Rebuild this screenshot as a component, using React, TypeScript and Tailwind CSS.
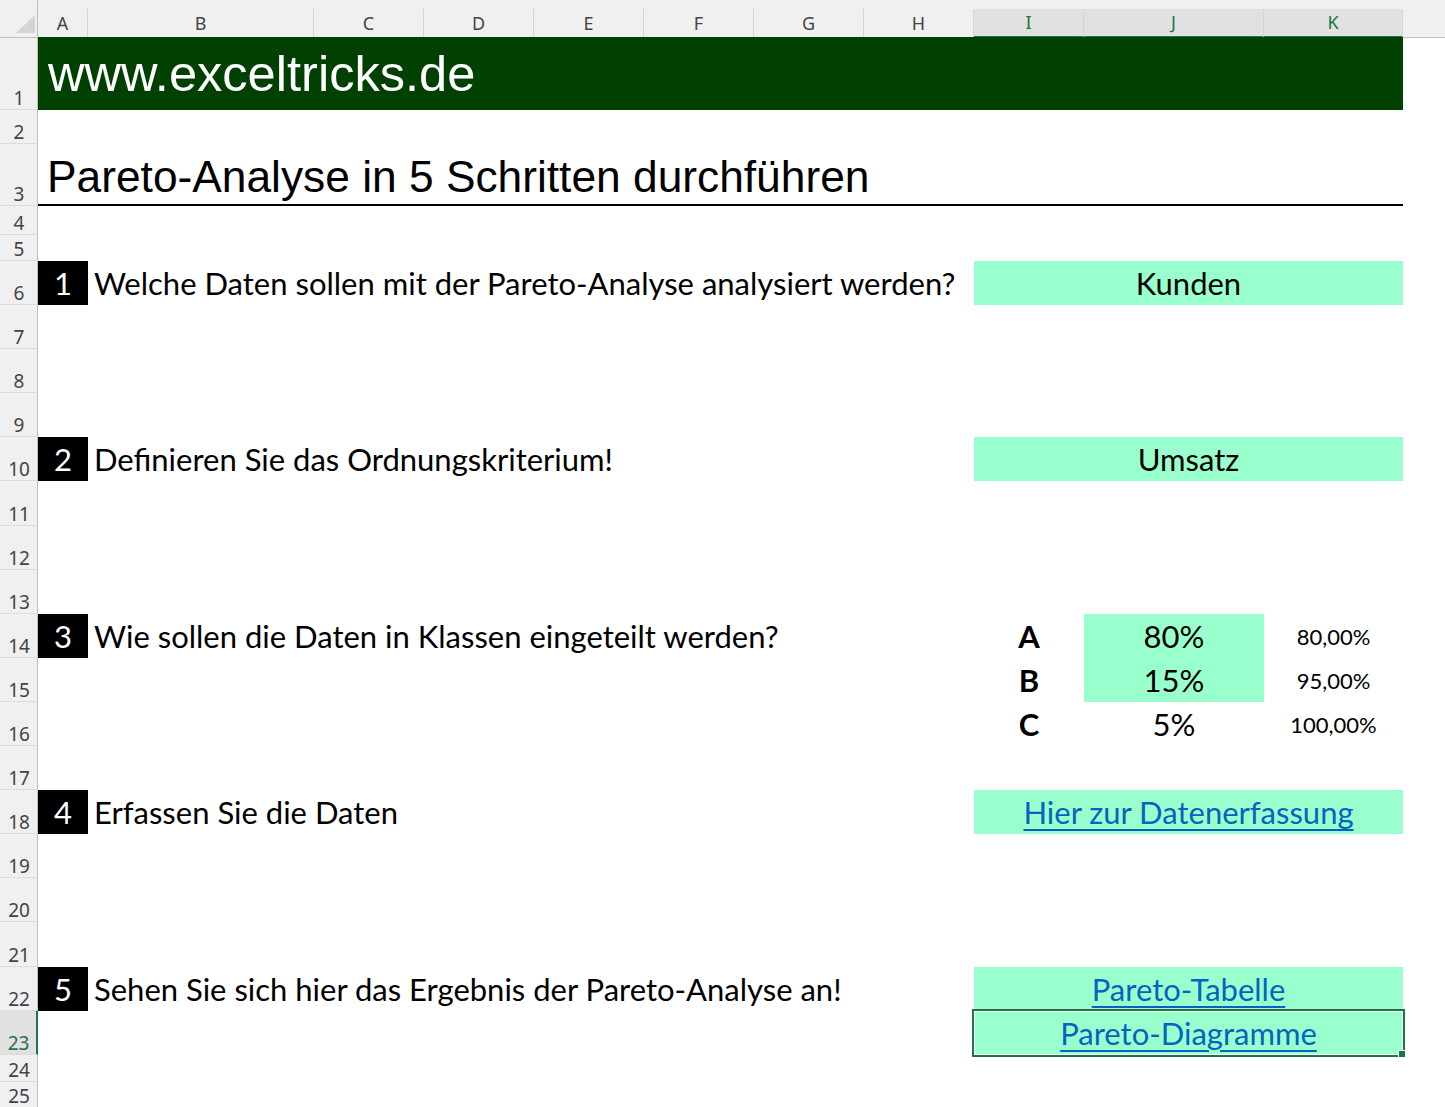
import type { ReactNode } from 'react';

const COLS = 'grid grid-cols-[38px_50px_226px_110px_110px_110px_110px_110px_110px_110px_180px_139px_1fr]';
const LETTERS = ['A', 'B', 'C', 'D', 'E', 'F', 'G', 'H', 'I', 'J', 'K'];
const SELECTED_COLS = ['I', 'J', 'K'];

const ColumnHeader = () => (
  <div className={`${COLS} h-[37px] bg-[#f0f0f0] font-['Noto_Sans',sans-serif] text-[18px]`}>
    <div className="relative border-r border-b border-[#bfbfbf]">
      <svg className="absolute left-0 top-0" width="38" height="37" viewBox="0 0 38 37">
        <polygon points="16,33 35,15 35,33" fill="#d4d4d4" />
      </svg>
    </div>
    {LETTERS.map(l => {
      const sel = SELECTED_COLS.includes(l);
      return (
        <div key={l}
          className={`mt-[9px] flex items-center justify-center border-r border-r-[#d4d4d4] ${
            sel ? 'bg-[#e1e1e1] text-[#217346] border-b-2 border-b-[#217346]' : 'text-[#444] border-b border-b-[#bfbfbf]'
          }`}>
          {l}
        </div>
      );
    })}
    <div className="mt-[9px] border-b border-b-[#bfbfbf]" />
  </div>
);

const Row = ({ n, h, selected = false, children }: { n: number; h: string; selected?: boolean; children?: ReactNode }) => (
  <div className={`${COLS} ${h}`}>
    <div className={`row-start-1 col-start-1 flex items-end justify-center pb-[1px] pl-[1px] leading-none font-['Noto_Sans',sans-serif] text-[19px] border-b border-b-[#dcdcdc] ${
      selected ? 'bg-[#e1e1e1] text-[#217346] border-r-2 border-r-[#217346]' : 'bg-[#f0f0f0] text-[#444] border-r border-r-[#bfbfbf]'
    }`}>
      {n}
    </div>
    {children}
  </div>
);

const Step = ({ n, text }: { n: number; text: string }) => (
  <>
    <div className="row-start-1 col-start-2 bg-black text-white flex items-end justify-center pb-[6px] text-[31px] leading-none">{n}</div>
    <div className="row-start-1 col-start-3 flex items-end pl-[6px] pb-[6px] whitespace-nowrap text-[31px] leading-none text-black">{text}</div>
  </>
);

const Answer = ({ children, link = false }: { children: ReactNode; link?: boolean }) => (
  <div className="row-start-1 col-start-10 col-span-3 bg-[#99ffcc] flex items-end justify-center pb-[6px] text-[31px] leading-none whitespace-nowrap">
    {link ? (
      <span className="text-[#0563c1] underline decoration-2 underline-offset-[5px]">{children}</span>
    ) : children}
  </div>
);

const ClassCells = ({ cls, pct, cum, green }: { cls: string; pct: string; cum: string; green: boolean }) => (
  <>
    <div className="row-start-1 col-start-10 flex items-end justify-center pb-[6px] text-[31px] leading-none font-bold">{cls}</div>
    <div className={`row-start-1 col-start-11 flex items-end justify-center pb-[6px] text-[31px] leading-none ${green ? 'bg-[#99ffcc]' : ''}`}>{pct}</div>
    <div className="row-start-1 col-start-12 flex items-end justify-center pb-[10px] text-[22px] leading-none">{cum}</div>
  </>
);

export default function App() {
  return (
    <div className="w-[1445px] h-[1107px] overflow-hidden bg-white font-['Lato',sans-serif] text-black">
      <ColumnHeader />

      <Row n={1} h="h-[73px]">
        <div className="row-start-1 col-start-2 col-span-11 bg-[#004000] flex items-end pl-[10px] pb-[10px] font-['Liberation_Sans',Arial,sans-serif] text-[50.6px] leading-none text-white whitespace-nowrap">
          www.exceltricks.de
        </div>
      </Row>
      <Row n={2} h="h-[34px]" />
      <Row n={3} h="h-[62px]">
        <div className="row-start-1 col-start-2 col-span-11 border-b-2 border-black flex items-end pl-[9px] pb-[5px] font-['Liberation_Sans',Arial,sans-serif] text-[44.3px] leading-none whitespace-nowrap">
          Pareto-Analyse in 5 Schritten durchführen
        </div>
      </Row>
      <Row n={4} h="h-[29px]" />
      <Row n={5} h="h-[26px]" />

      <Row n={6} h="h-[44.1px]">
        <Step n={1} text="Welche Daten sollen mit der Pareto-Analyse analysiert werden?" />
        <Answer>Kunden</Answer>
      </Row>
      <Row n={7} h="h-[44.1px]" />
      <Row n={8} h="h-[44.1px]" />
      <Row n={9} h="h-[44.1px]" />
      <Row n={10} h="h-[44.1px]">
        <Step n={2} text="Definieren Sie das Ordnungskriterium!" />
        <Answer>Umsatz</Answer>
      </Row>
      <Row n={11} h="h-[44.1px]" />
      <Row n={12} h="h-[44.1px]" />
      <Row n={13} h="h-[44.1px]" />
      <Row n={14} h="h-[44.1px]">
        <Step n={3} text="Wie sollen die Daten in Klassen eingeteilt werden?" />
        <ClassCells cls="A" pct="80%" cum="80,00%" green />
      </Row>
      <Row n={15} h="h-[44.1px]">
        <ClassCells cls="B" pct="15%" cum="95,00%" green />
      </Row>
      <Row n={16} h="h-[44.1px]">
        <ClassCells cls="C" pct="5%" cum="100,00%" green={false} />
      </Row>
      <Row n={17} h="h-[44.1px]" />
      <Row n={18} h="h-[44.1px]">
        <Step n={4} text="Erfassen Sie die Daten" />
        <Answer link>Hier zur Datenerfassung</Answer>
      </Row>
      <Row n={19} h="h-[44.1px]" />
      <Row n={20} h="h-[44.1px]" />
      <Row n={21} h="h-[44.1px]" />
      <Row n={22} h="h-[44.1px]">
        <Step n={5} text="Sehen Sie sich hier das Ergebnis der Pareto-Analyse an!" />
        <Answer link>Pareto-Tabelle</Answer>
      </Row>
      <Row n={23} h="h-[44.1px]" selected>
        <div className="relative row-start-1 col-start-10 col-span-3 bg-[#99ffcc] flex items-end justify-center pb-[6px] text-[31px] leading-none whitespace-nowrap">
          <span className="text-[#0563c1] underline decoration-2 underline-offset-[5px]">Pareto-Diagramme</span>
          <div className="absolute -left-[2px] -top-[2px] -right-[2px] -bottom-[2px] border-2 border-[#217346] pointer-events-none">
            <div className="h-full w-full border border-white" />
          </div>
          <div className="absolute -right-[3px] -bottom-[3px] w-[8px] h-[8px] bg-[#217346] border border-white" />
        </div>
      </Row>
      <Row n={24} h="h-[27px]" />
      <Row n={25} h="h-[26px]" />
    </div>
  );
}
